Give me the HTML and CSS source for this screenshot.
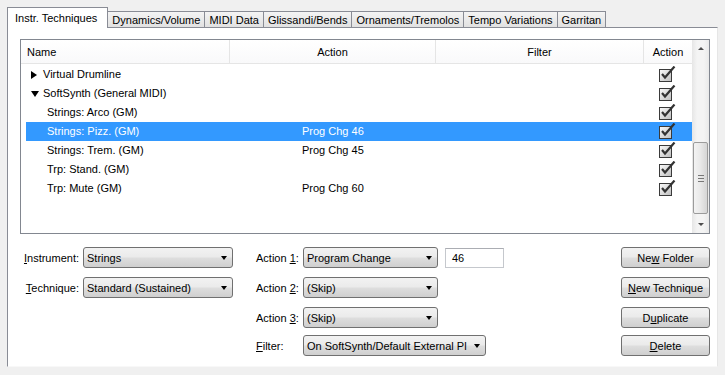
FILE: index.html
```html
<!DOCTYPE html>
<html lang="en">
  <head>
    <meta charset="UTF-8" />
    <title>Instrument Techniques</title>
    <link rel="stylesheet" href="styles.css">
  </head>
  <body>
    <div class="window">
      <div class="tabs">
        <div class="tab active">Instr. Techniques</div>
        <div class="tab">Dynamics/Volume</div>
        <div class="tab">MIDI Data</div>
        <div class="tab">Glissandi/Bends</div>
        <div class="tab">Ornaments/Tremolos</div>
        <div class="tab">Tempo Variations</div>
        <div class="tab">Garritan</div>
      </div>

      <div class="panel">
        <div class="list">
          <div class="list-main">
            <div class="list-head">
              <div class="head-cell head-name">Name</div>
              <div class="head-cell head-action">Action</div>
              <div class="head-cell head-filter">Filter</div>
              <div class="head-cell head-check">Action</div>
            </div>
            <div class="rows">
              <div class="row">
                <div class="cell-name folder"><i class="tri-right"></i>Virtual Drumline</div>
                <div class="cell-action"></div>
                <div class="cell-check"><svg class="check" width="17" height="16" viewBox="0 0 17 16"><use href="#chk"/></svg></div>
              </div>
              <div class="row">
                <div class="cell-name folder"><i class="tri-down"></i>SoftSynth (General MIDI)</div>
                <div class="cell-action"></div>
                <div class="cell-check"><svg class="check" width="17" height="16" viewBox="0 0 17 16"><use href="#chk"/></svg></div>
              </div>
              <div class="row">
                <div class="cell-name">Strings: Arco (GM)</div>
                <div class="cell-action"></div>
                <div class="cell-check"><svg class="check" width="17" height="16" viewBox="0 0 17 16"><use href="#chk"/></svg></div>
              </div>
              <div class="row selected">
                <div class="cell-name">Strings: Pizz. (GM)</div>
                <div class="cell-action">Prog Chg 46</div>
                <div class="cell-check"><svg class="check" width="17" height="16" viewBox="0 0 17 16"><use href="#chk"/></svg></div>
              </div>
              <div class="row">
                <div class="cell-name">Strings: Trem. (GM)</div>
                <div class="cell-action">Prog Chg 45</div>
                <div class="cell-check"><svg class="check" width="17" height="16" viewBox="0 0 17 16"><use href="#chk"/></svg></div>
              </div>
              <div class="row">
                <div class="cell-name">Trp: Stand. (GM)</div>
                <div class="cell-action"></div>
                <div class="cell-check"><svg class="check" width="17" height="16" viewBox="0 0 17 16"><use href="#chk"/></svg></div>
              </div>
              <div class="row">
                <div class="cell-name">Trp: Mute (GM)</div>
                <div class="cell-action">Prog Chg 60</div>
                <div class="cell-check"><svg class="check" width="17" height="16" viewBox="0 0 17 16"><use href="#chk"/></svg></div>
              </div>
            </div>
          </div>
          <div class="scrollbar">
            <div class="sb-btn"><i class="sb-up"></i></div>
            <div class="sb-track">
              <div class="sb-thumb"><i class="grip"></i></div>
            </div>
            <div class="sb-btn"><i class="sb-down"></i></div>
          </div>
        </div>

        <div class="controls">
          <div class="ctl-row">
            <div class="grp-left">
              <span class="lbl"><u>I</u>nstrument:</span>
              <div class="combo combo-inst">Strings<i class="arrow"></i></div>
            </div>
            <div class="grp-mid">
              <span class="lbl-mid">Action <u>1</u>:</span>
              <div class="combo combo-act">Program Change<i class="arrow"></i></div>
              <div class="field">46</div>
            </div>
            <button class="btn">Ne<u>w</u> Folder</button>
          </div>
          <div class="ctl-row row-2">
            <div class="grp-left">
              <span class="lbl"><u>T</u>echnique:</span>
              <div class="combo combo-inst">Standard (Sustained)<i class="arrow"></i></div>
            </div>
            <div class="grp-mid">
              <span class="lbl-mid">Action <u>2</u>:</span>
              <div class="combo combo-act">(Skip)<i class="arrow"></i></div>
            </div>
            <button class="btn"><u>N</u>ew Technique</button>
          </div>
          <div class="ctl-row row-3">
            <div class="grp-left"></div>
            <div class="grp-mid">
              <span class="lbl-mid">Action <u>3</u>:</span>
              <div class="combo combo-act">(Skip)<i class="arrow"></i></div>
            </div>
            <button class="btn">D<u>u</u>plicate</button>
          </div>
          <div class="ctl-row row-4">
            <div class="grp-left"></div>
            <div class="grp-mid">
              <span class="lbl-mid"><u>F</u>ilter:</span>
              <div class="combo combo-filter">On SoftSynth/Default External Pl<i class="arrow"></i></div>
            </div>
            <button class="btn"><u>D</u>elete</button>
          </div>
        </div>
      </div>
    </div>

    <svg width="0" height="0" class="defs">
      <defs>
        <linearGradient id="chkFill" x1="0" y1="0" x2="1" y2="1">
          <stop offset="0" stop-color="#fbfbfb" />
          <stop offset="1" stop-color="#bdbdbd" />
        </linearGradient>
        <g id="chk">
          <rect x="0.5" y="3.5" width="12" height="12" fill="url(#chkFill)" stroke="#3a3a3a" />
          <path d="M3 8 L6 11.5 L15.5 0.5" fill="none" stroke="#333" stroke-width="2.2" />
        </g>
      </defs>
    </svg>
  </body>
</html>
```

FILE: styles.css
```css
body {
  margin: 0;
  padding: 0;
  background-color: #f0f0f0;
  font-family: "Liberation Sans", Arial, sans-serif;
  font-size: 11px;
  color: #000;
}

.window {
  padding-left: 7px;
  width: 711px;
}

.defs {
  position: absolute;
}

/* tabs */

.tabs {
  display: flex;
  align-items: flex-end;
  padding-top: 7px;
  height: 20px;
}

.tab {
  height: 15px;
  line-height: 16px;
  padding: 0 4px;
  border: 1px solid #898c95;
  border-bottom: none;
  border-left: none;
  background: linear-gradient(#f4f4f4, #e1e1e1);
  white-space: nowrap;
}

.tab.active {
  height: 20px;
  line-height: 20px;
  padding: 0 10px 0 7px;
  border-left: 1px solid #898c95;
  background: #fff;
  margin-bottom: -1px;
  position: relative;
  z-index: 1;
}

.panel {
  height: 338px;
  border: 1px solid #898c95;
  border-right-color: #e6e6e6;
  border-bottom-color: #f8f8f8;
  background-color: #fff;
}

/* list view */

.list {
  display: flex;
  margin: 11px 7px 0 12px;
  height: 193px;
  border: 1px solid #828790;
}

.list-main {
  flex: 1;
}

.list-head {
  display: flex;
  height: 23px;
  line-height: 24px;
  border-bottom: 1px solid #e5e5e5;
  background: linear-gradient(#fff, #f9f9fa);
}

.head-cell {
  border-right: 1px solid #e5e5e5;
  text-align: center;
}

.head-name {
  width: 202px;
  padding-left: 6px;
  text-align: left;
}

.head-action {
  width: 205px;
}

.head-filter {
  width: 207px;
}

.head-check {
  flex: 1;
  border-right: none;
}

.rows {
  padding: 1px 0 0 5px;
}

.row {
  display: flex;
  height: 19px;
  line-height: 19px;
}

.row.selected {
  background-color: #3399ff;
  color: #fff;
}

.cell-name {
  width: 255px;
  padding-left: 21px;
}

.cell-name.folder {
  padding-left: 5px;
  width: 271px;
  display: flex;
  align-items: center;
}

.cell-action {
  width: 357px;
}

.cell-check {
  flex: 1;
  padding-top: 1px;
}

.check {
  display: block;
}

.tri-right {
  width: 0;
  height: 0;
  border-left: 6px solid #000;
  border-top: 4px solid transparent;
  border-bottom: 4px solid transparent;
  margin-right: 6px;
}

.tri-down {
  width: 0;
  height: 0;
  border-top: 6px solid #000;
  border-left: 4px solid transparent;
  border-right: 4px solid transparent;
  margin-right: 4px;
}

/* scrollbar */

.scrollbar {
  width: 17px;
  display: flex;
  flex-direction: column;
  background: linear-gradient(90deg, #e6e6e6, #f4f4f4 30%, #f4f4f4 70%, #e9e9e9);
}

.sb-btn {
  height: 17px;
  display: flex;
  align-items: center;
  justify-content: center;
}

.sb-up {
  width: 0;
  height: 0;
  border-bottom: 3px solid #4d4d4d;
  border-left: 3px solid transparent;
  border-right: 3px solid transparent;
}

.sb-down {
  width: 0;
  height: 0;
  border-top: 3px solid #4d4d4d;
  border-left: 3px solid transparent;
  border-right: 3px solid transparent;
}

.sb-track {
  flex: 1;
  padding-top: 85px;
}

.sb-thumb {
  height: 70px;
  margin: 0 1px;
  border: 1px solid #9b9b9b;
  border-radius: 2px;
  background: linear-gradient(90deg, #f3f3f3, #e8e8e8 50%, #d5d5d5);
  display: flex;
  align-items: center;
  justify-content: center;
}

.grip {
  width: 6px;
  height: 5px;
  border-top: 1px solid #777;
  border-bottom: 1px solid #777;
  background: linear-gradient(transparent 2px, #777 2px, #777 3px, transparent 3px);
}

/* bottom controls */

.controls {
  margin-top: 13px;
  padding: 0 7px 0 14px;
}

.ctl-row {
  display: flex;
  align-items: center;
  height: 21px;
}

.row-2,
.row-3 {
  margin-top: 9px;
}

.row-4 {
  margin-top: 7px;
}

.grp-left {
  width: 234px;
  display: flex;
  align-items: center;
}

.grp-mid {
  display: flex;
  align-items: center;
}

.lbl {
  width: 57px;
  margin-right: 4px;
  text-align: right;
}

.lbl-mid {
  width: 47px;
}

.combo {
  box-sizing: border-box;
  height: 21px;
  padding-left: 3px;
  border: 1px solid #707070;
  border-radius: 3px;
  background: linear-gradient(#f2f2f2, #ebebeb 45%, #dddddd 55%, #cfcfcf);
  display: flex;
  align-items: center;
  justify-content: space-between;
  white-space: nowrap;
  overflow: hidden;
}

.combo-inst {
  width: 150px;
}

.combo-act {
  width: 135px;
}

.combo-filter {
  width: 183px;
}

.arrow {
  flex-shrink: 0;
  width: 0;
  height: 0;
  margin: 0 5px 0 4px;
  border-top: 4px solid #000;
  border-left: 3.5px solid transparent;
  border-right: 3.5px solid transparent;
}

.field {
  width: 59px;
  height: 20px;
  box-sizing: border-box;
  margin-left: 7px;
  padding-left: 6px;
  line-height: 18px;
  border: 1px solid #c5c8cd;
  border-top-color: #abadb3;
}

.btn {
  margin-left: auto;
  width: 89px;
  height: 21px;
  padding: 0;
  font-family: inherit;
  font-size: 11px;
  color: #000;
  border: 1px solid #707070;
  border-radius: 3px;
  background: linear-gradient(#f2f2f2, #ebebeb 45%, #dddddd 55%, #cfcfcf);
}
```
